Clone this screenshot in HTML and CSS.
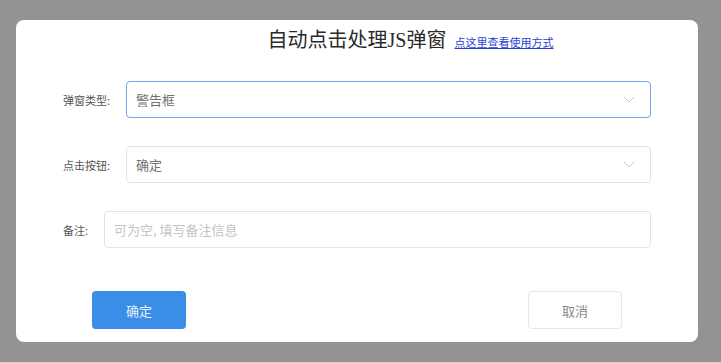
FILE: index.html
```html
<!DOCTYPE html>
<html lang="zh-CN">
<head>
    <meta charset="UTF-8">
    <meta name="viewport" content="width=device-width, initial-scale=1.0">
    <title>自动点击处理JS弹窗</title>
    <link rel="stylesheet" href="styles.css">
</head>
<body>
    <div class="dialog">
        <div class="dialog-header">
            <span></span>
            <h1>自动点击处理JS弹窗</h1>
            <a href="#" class="help-link">点这里查看使用方式</a>
        </div>

        <div class="form">
            <div class="form-group">
                <label>弹窗类型:</label>
                <div class="select active">
                    <span>警告框</span>
                    <svg class="arrow" width="12" height="7" viewBox="0 0 12 7"><path d="M1 1l5 5 5-5" fill="none" stroke="#c8c8c8" stroke-width="1"/></svg>
                </div>
            </div>

            <div class="form-group">
                <label>点击按钮:</label>
                <div class="select">
                    <span>确定</span>
                    <svg class="arrow" width="12" height="7" viewBox="0 0 12 7"><path d="M1 1l5 5 5-5" fill="none" stroke="#c8c8c8" stroke-width="1"/></svg>
                </div>
            </div>

            <div class="form-group">
                <label for="remark">备注:</label>
                <input type="text" id="remark" placeholder="可为空, 填写备注信息">
            </div>
        </div>

        <div class="actions">
            <button class="btn-primary">确定</button>
            <button class="btn-default">取消</button>
        </div>
    </div>
</body>
</html>
```

FILE: styles.css
```css
body {
    margin: 0;
    background-color: #939393;
    font-family: 'Noto Sans CJK SC', sans-serif;
}
.dialog {
    width: 682px;
    height: 322px;
    margin: 20px 0 0 16px;
    background-color: white;
    border-radius: 8px;
    box-sizing: border-box;
}
.dialog-header {
    display: grid;
    grid-template-columns: 1fr auto 1fr;
    align-items: center;
    height: 41px;
}
h1 {
    margin: 0;
    font-family: 'Liberation Serif', 'Noto Sans CJK SC', serif;
    font-size: 20px;
    font-weight: normal;
    color: #2a2a2a;
    line-height: 41px;
}
.help-link {
    justify-self: start;
    margin-left: 8px;
    margin-top: 2px;
    font-size: 11px;
    color: #2b3fd4;
}
.form {
    display: flex;
    flex-direction: column;
    gap: 28px;
    padding: 20px 47px 0 47px;
}
.form-group {
    display: flex;
    align-items: center;
}
label {
    font-size: 11px;
    color: #555;
    margin-right: 16px;
    white-space: nowrap;
}
.select, input {
    flex: 1;
    height: 37px;
    border: 1px solid #e3e3e3;
    border-radius: 4px;
    box-sizing: border-box;
    padding: 0 15px 0 9px;
    font-family: inherit;
    font-size: 13px;
    color: #707070;
}
.select {
    display: flex;
    align-items: center;
    justify-content: space-between;
}
.select.active {
    border-color: #6ea7ee;
}
input::placeholder {
    color: #c4c4c4;
}
.actions {
    display: flex;
    justify-content: space-between;
    padding: 43px 76px 0 76px;
}
button {
    width: 94px;
    height: 38px;
    border-radius: 4px;
    font-family: inherit;
    font-size: 13px;
    cursor: pointer;
}
.btn-primary {
    background-color: #3b8ee8;
    border: none;
    color: #e8f1fc;
}
.btn-default {
    background-color: white;
    border: 1px solid #e6e6e6;
    color: #888;
}
```
